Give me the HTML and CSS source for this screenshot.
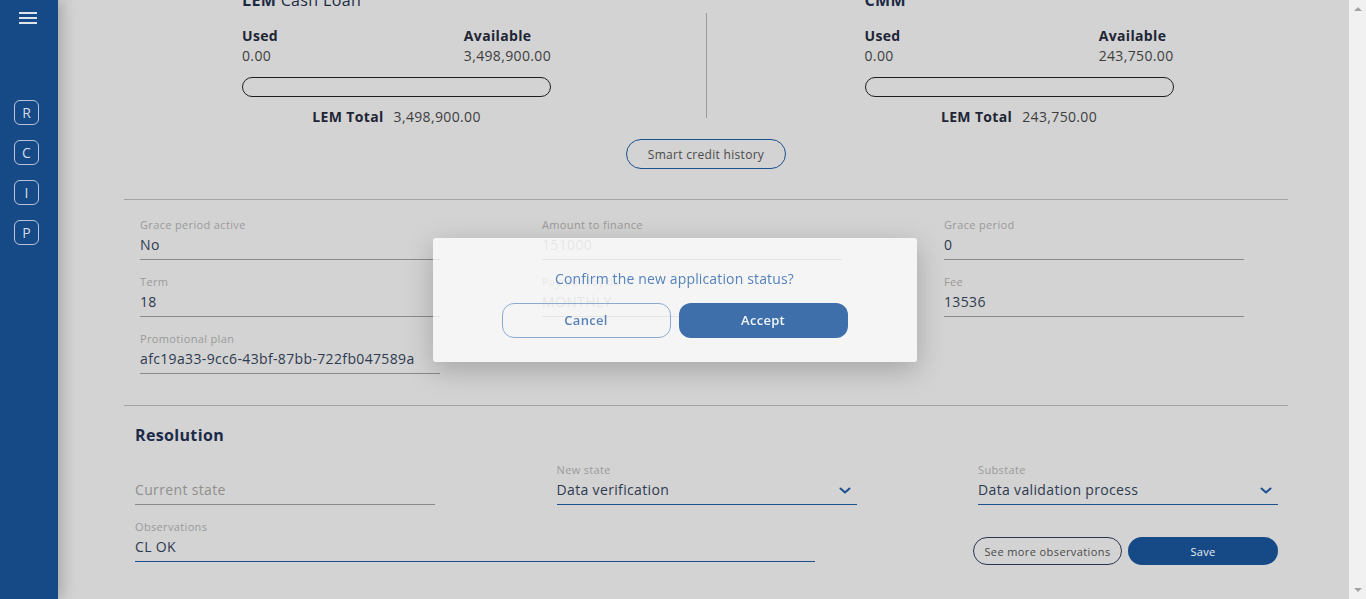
FILE: index.html
```html
<!DOCTYPE html>
<html lang="en">
<head>
<meta charset="utf-8">
<title>Application</title>
<link rel="stylesheet" href="styles.css">
</head>
<body>
<aside class="sidebar">
  <div class="burger"><span></span><span></span><span></span></div>
  <nav class="nav">
    <div class="nav-item">R</div>
    <div class="nav-item">C</div>
    <div class="nav-item">I</div>
    <div class="nav-item">P</div>
  </nav>
</aside>
<main class="main">
  <div class="content">
    <section class="limits">
      <div class="limit limit-left">
        <div class="limit-title"><b>LEM</b> Cash Loan</div>
        <div class="limit-row">
          <div class="limit-cell"><div class="lbl-strong">Used</div><div class="val">0.00</div></div>
          <div class="limit-cell"><div class="lbl-strong">Available</div><div class="val">3,498,900.00</div></div>
        </div>
        <div class="bar"></div>
        <div class="total"><b>LEM Total</b><span>3,498,900.00</span></div>
      </div>
      <div class="vdivider"></div>
      <div class="limit limit-right">
        <div class="limit-title"><b>CMM</b></div>
        <div class="limit-row">
          <div class="limit-cell"><div class="lbl-strong">Used</div><div class="val">0.00</div></div>
          <div class="limit-cell"><div class="lbl-strong">Available</div><div class="val">243,750.00</div></div>
        </div>
        <div class="bar"></div>
        <div class="total"><b>LEM Total</b><span>243,750.00</span></div>
      </div>
    </section>
    <div class="center-row"><button class="btn-outline-sm">Smart credit history</button></div>
    <hr class="rule rule-1">
    <section class="fields">
      <div class="field-col">
        <div class="field"><div class="f-label">Grace period active</div><div class="f-value">No</div></div>
        <div class="field"><div class="f-label">Term</div><div class="f-value">18</div></div>
        <div class="field"><div class="f-label">Promotional plan</div><div class="f-value">afc19a33-9cc6-43bf-87bb-722fb047589a</div></div>
      </div>
      <div class="field-col">
        <div class="field disabled"><div class="f-label">Amount to finance</div><div class="f-value">151000</div></div>
        <div class="field disabled"><div class="f-label">Payment cycle</div><div class="f-value">MONTHLY</div></div>
      </div>
      <div class="field-col">
        <div class="field"><div class="f-label">Grace period</div><div class="f-value">0</div></div>
        <div class="field"><div class="f-label">Fee</div><div class="f-value">13536</div></div>
      </div>
    </section>
    <hr class="rule rule-2">
    <section class="resolution">
      <h2 class="res-title">Resolution</h2>
      <div class="res-row">
        <div class="field res-field"><div class="f-label"></div><div class="f-value placeholder">Current state</div></div>
        <div class="field res-field select"><div class="f-label">New state</div><div class="f-value">Data verification<svg class="chev" viewBox="0 0 12 7" width="12" height="7"><path d="M1.5 1.5 L6 5.5 L10.5 1.5" fill="none" stroke="#1d4f91" stroke-width="2" stroke-linecap="round" stroke-linejoin="round"/></svg></div></div>
        <div class="field res-field select"><div class="f-label">Substate</div><div class="f-value">Data validation process<svg class="chev" viewBox="0 0 12 7" width="12" height="7"><path d="M1.5 1.5 L6 5.5 L10.5 1.5" fill="none" stroke="#1d4f91" stroke-width="2" stroke-linecap="round" stroke-linejoin="round"/></svg></div></div>
      </div>
      <div class="res-row2">
        <div class="field obs select"><div class="f-label">Observations</div><div class="f-value">CL OK</div></div>
        <div class="actions">
          <button class="btn-outline-dark">See more observations</button>
          <button class="btn-save">Save</button>
        </div>
      </div>
    </section>
  </div>
</main>
<div class="scrollbar"><span class="arrow-up"></span><span class="arrow-down"></span></div>

<div class="overlay">
  <div class="modal">
    <p class="modal-text">Confirm the new application status?</p>
    <div class="modal-actions">
      <button class="m-cancel">Cancel</button>
      <button class="m-accept">Accept</button>
    </div>
  </div>
</div>
</body>
</html>
```
FILE: styles.css
```css
* { box-sizing: border-box; }
html, body { margin: 0; padding: 0; }
body {
  display: flex;
  width: 1366px;
  height: 599px;
  overflow: hidden;
  font-family: "Open Sans", "DejaVu Sans", sans-serif;
  letter-spacing: 0.35px;
  background: #d3d3d3;
  color: #2e3a50;
}

/* sidebar */
.sidebar {
  width: 58px;
  flex: none;
  background: #154a87;
  box-shadow: 4px 0 14px rgba(0, 0, 0, 0.22);
  position: relative;
  z-index: 2;
  display: flex;
  flex-direction: column;
  padding: 12px 0 0 14px;
}
.burger { width: 18px; display: flex; flex-direction: column; gap: 3px; margin-left: 5px; }
.burger span { display: block; height: 2px; background: #dfe3ea; }
.nav { margin-top: 76px; display: flex; flex-direction: column; gap: 15px; }
.nav-item {
  width: 25px; height: 25px;
  border: 1px solid #b9c4d6;
  border-radius: 6px;
  color: #d7dde8;
  font-size: 14px;
  letter-spacing: 0;
  display: flex; align-items: center; justify-content: center;
}

/* main */
.main { flex: 1; min-width: 0; overflow: hidden; }
.content { padding: 0 61px 0 66px; }

.limits { display: grid; grid-template-columns: 1fr 1px 1fr; margin-top: -10px; align-items: start; }
.limit-left { padding-left: 118px; }
.limit-right { padding-left: 158px; }
.limit > * { width: 309px; }
.limit-title { font-size: 16px; line-height: 20px; color: #1c2a44; }
.limit-title b { font-weight: 700; }
.limit-row { display: flex; justify-content: space-between; margin-top: 16px; }
.lbl-strong { font-weight: 700; font-size: 14px; line-height: 20px; color: #1e2535; }
.val { font-size: 14px; line-height: 20px; color: #3e3e3e; }
.bar { height: 20px; border: 1px solid #1e1e1e; border-radius: 10px; margin-top: 11px; }
.total { margin-top: 10px; font-size: 14px; line-height: 20px; display: flex; justify-content: center; gap: 10px; color: #3e3e3e; }
.total b { color: #1e2535; }
.vdivider { width: 1px; background: #9a9a9a; height: 105px; margin-top: 23px; }

.center-row { display: flex; justify-content: center; margin-top: 12px; }
.btn-outline-sm {
  width: 160px; height: 30px;
  border: 1px solid #1d4f91; border-radius: 15px;
  background: transparent; color: #4a4a4a;
  font-family: inherit; font-size: 12px; letter-spacing: 0.3px;
}

.rule { border: 0; height: 1px; background: #a3a3a3; margin: 0; }
.rule-1 { margin-top: 30px; }
.rule-2 { margin-top: 31px; }

.fields { display: flex; gap: 102px; padding: 18px 0 0 16px; }
.field-col { width: 300px; display: flex; flex-direction: column; gap: 15px; }
.field { border-bottom: 1px solid #8a8a8a; padding-bottom: 4px; }
.f-label { font-size: 11px; line-height: 14px; height: 14px; color: #9a9a9a; margin-bottom: 3px; }
.f-value { font-size: 14px; line-height: 20px; height: 20px; color: #2e3a50; display: flex; align-items: center; justify-content: space-between; }
.disabled .f-value { color: #8c8c8c; }
.placeholder { color: #8f8f8f; }
.chev { margin-right: 6px; }

.resolution { padding: 0 10px 0 11px; }
.res-title { margin: 19px 0 0; font-size: 16px; line-height: 20px; font-weight: 700; color: #1c2a4a; }
.res-row { display: flex; justify-content: space-between; margin-top: 18px; }
.res-field { width: 300px; }
.select { border-bottom-color: #1d4f91; }
.res-row2 { display: flex; justify-content: space-between; align-items: flex-end; margin-top: 15px; }
.obs { width: 680px; }
.actions { display: flex; gap: 6px; margin-bottom: -3px; }
.btn-outline-dark {
  width: 149px; height: 28px;
  border: 1px solid #2a3550; border-radius: 14px;
  background: transparent; color: #4a4a4a;
  font-family: inherit; font-size: 11px; letter-spacing: 0.4px;
}
.btn-save {
  width: 150px; height: 28px;
  border: 0; border-radius: 14px;
  background: #154a87; color: #e8ecf2;
  font-family: inherit; font-size: 11px; letter-spacing: 0.3px;
}

/* scrollbar */
.scrollbar { width: 17px; flex: none; background: #f1f1f1; position: relative; }
.arrow-up, .arrow-down { position: absolute; left: 5px; width: 0; height: 0; border-left: 4px solid transparent; border-right: 4px solid transparent; }
.arrow-up { top: 7px; border-bottom: 4px solid #a3a3a3; }
.arrow-down { bottom: 7px; border-top: 4px solid #a3a3a3; }

/* modal */
.overlay {
  position: fixed; top: 0; left: 0; right: 17px; bottom: 0;
  display: flex; align-items: center; justify-content: center;
  z-index: 5;
}
.modal {
  width: 484px; height: 124px;
  background: rgba(255, 255, 255, 0.78);
  border-radius: 3px;
  box-shadow: 0 8px 28px rgba(0, 0, 0, 0.22);
  display: flex; flex-direction: column; align-items: center;
  padding-top: 31px;
}
.modal-text { margin: 0; font-size: 14px; line-height: 20px; color: #5582bb; letter-spacing: 0.15px; }
.modal-actions { display: flex; gap: 8px; margin-top: 14px; }
.m-cancel, .m-accept {
  width: 169px; height: 35px; border-radius: 12px;
  font-family: inherit; font-size: 13px; font-weight: 600; letter-spacing: 0.3px;
}
.m-cancel { background: transparent; border: 1.5px solid #8aaad2; color: #5a82b6; }
.m-accept { background: #3e6fab; border: 0; color: #f2f5fa; }
```
